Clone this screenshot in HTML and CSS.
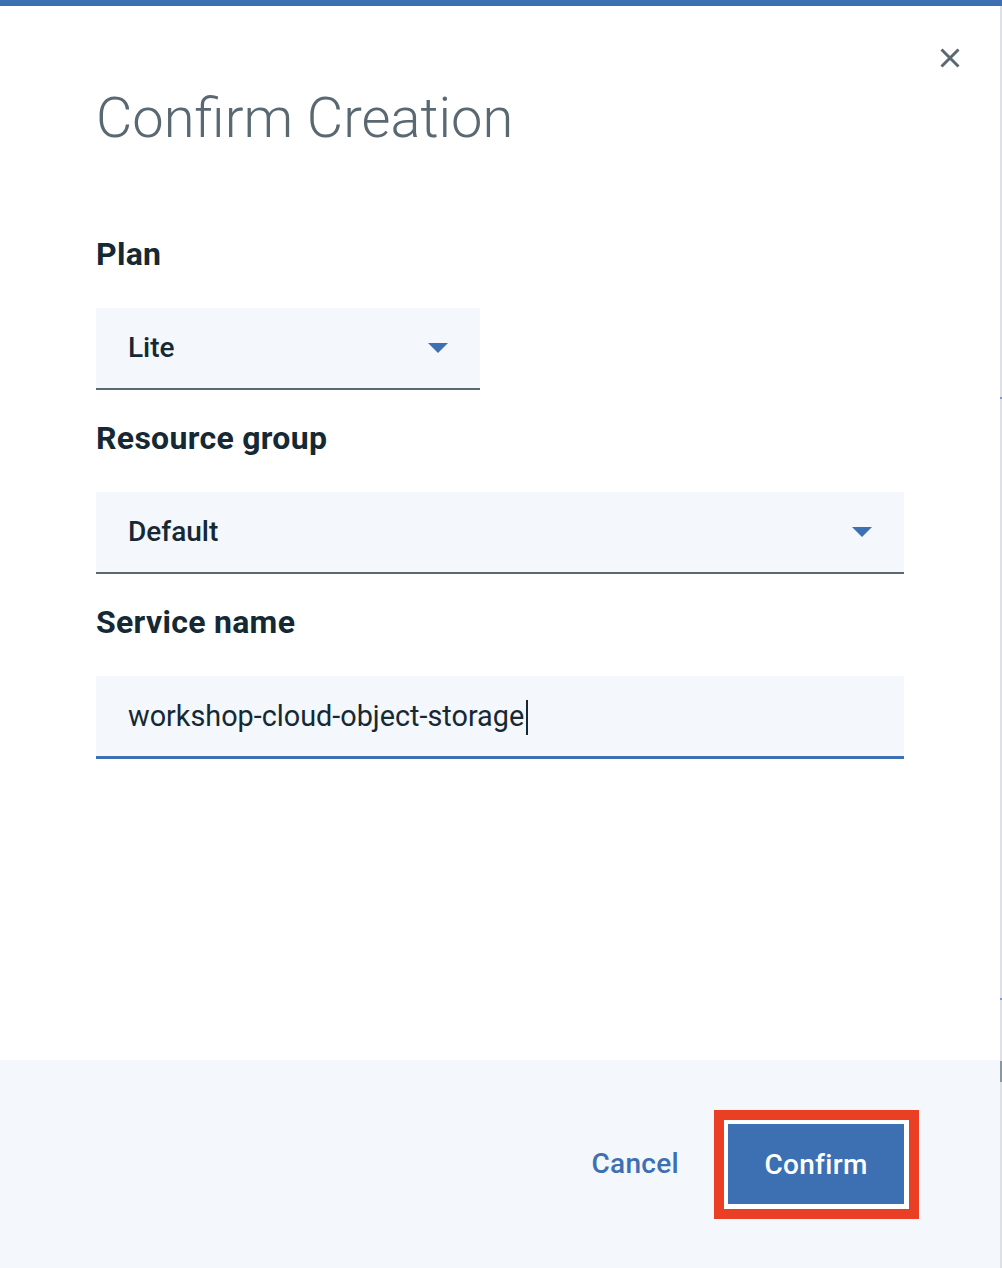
FILE: index.html
```html
<!DOCTYPE html>
<html lang="en">
<head>
<meta charset="utf-8">
<title>Confirm Creation</title>
<link rel="stylesheet" href="styles.css">
</head>
<body>
<div class="topbar"></div>
<div class="page">
  <div class="modal">
    <div class="modal-body">
      <div class="header">
        <h1 class="title">Confirm Creation</h1>
        <button class="close" aria-label="Close">
          <svg width="20" height="20" viewBox="0 0 20 20"><path d="M1.5 1.5 L18.5 18.5 M18.5 1.5 L1.5 18.5" stroke="#5a6872" stroke-width="3" fill="none"/></svg>
        </button>
      </div>
      <div class="field field-first">
        <div class="label">Plan</div>
        <div class="select select-narrow">
          <span class="select-text">Lite</span>
          <svg class="caret" width="20" height="10" viewBox="0 0 20 10"><path d="M0 0 H20 L10 10 Z" fill="#3d70b2"/></svg>
        </div>
      </div>
      <div class="field">
        <div class="label">Resource group</div>
        <div class="select">
          <span class="select-text">Default</span>
          <svg class="caret" width="20" height="10" viewBox="0 0 20 10"><path d="M0 0 H20 L10 10 Z" fill="#3d70b2"/></svg>
        </div>
      </div>
      <div class="field">
        <div class="label">Service name</div>
        <div class="input">
          <span class="input-text">workshop-cloud-object-storage</span><span class="text-caret"></span>
        </div>
      </div>
    </div>
    <div class="footer">
      <button class="btn-cancel">Cancel</button>
      <div class="highlight">
        <button class="btn-confirm">Confirm</button>
      </div>
    </div>
  </div>
  <div class="scroll-edge">
    <div class="edge-seg edge-a"></div>
    <div class="edge-tick"></div>
    <div class="edge-seg edge-b"></div>
    <div class="edge-tick"></div>
    <div class="edge-seg edge-c"></div>
    <div class="edge-dark"></div>
    <div class="edge-seg edge-rest"></div>
  </div>
</div>
</body>
</html>
```

FILE: styles.css
```css
* { box-sizing: border-box; }
html, body { margin: 0; padding: 0; }
body {
  width: 1002px;
  height: 1268px;
  overflow: hidden;
  background: #ffffff;
  font-family: Roboto, "Liberation Sans", sans-serif;
  color: #152935;
}
.topbar {
  height: 6px;
  background: #3d70b2;
}
.page {
  display: flex;
  height: 1262px;
}
.modal {
  width: 1000px;
  display: flex;
  flex-direction: column;
  background: #ffffff;
}
.modal-body {
  flex: 1;
  padding: 42px 40px 0 96px;
}
.header {
  display: flex;
  justify-content: space-between;
  align-items: flex-start;
}
.title {
  margin: 35px 0 0 0;
  font-size: 56px;
  line-height: 70px;
  font-weight: 300;
  color: #5a6872;
  letter-spacing: 0;
}
.close {
  width: 20px;
  height: 20px;
  padding: 0;
  margin: 0;
  border: 0;
  background: transparent;
  display: block;
}
.close svg { display: block; }
.field {
  display: flex;
  flex-direction: column;
  margin-top: 28px;
  width: 808px;
}
.field-first { margin-top: 81px; }
.label {
  font-size: 32px;
  line-height: 40px;
  font-weight: 700;
  color: #152935;
  letter-spacing: 0.3px;
  margin-bottom: 34px;
}
.select {
  height: 82px;
  background: #f4f7fb;
  border-bottom: 2px solid #5a6872;
  display: flex;
  align-items: center;
  justify-content: space-between;
  padding: 0 32px 0 32px;
}
.select-narrow { width: 384px; }
.select-text {
  font-size: 28px;
  font-weight: 500;
  color: #152935;
  line-height: 80px;
}
.caret { display: block; }
.input {
  height: 83px;
  background: #f4f7fb;
  border-bottom: 3px solid #3d70b2;
  display: flex;
  align-items: center;
  padding: 0 32px;
}
.input-text {
  font-size: 28.8px;
  font-weight: 400;
  color: #152935;
  line-height: 80px;
}
.text-caret {
  display: inline-block;
  width: 2px;
  height: 35px;
  background: #152935;
  margin-left: 2px;
  margin-top: 2px;
}
.footer {
  height: 208px;
  background: #f4f7fb;
  display: flex;
  justify-content: flex-end;
  align-items: center;
  padding-right: 96px;
}
.btn-cancel {
  font-family: Roboto, "Liberation Sans", sans-serif;
  font-size: 28px;
  font-weight: 500;
  color: #3d70b2;
  background: transparent;
  border: 0;
  padding: 0;
  margin-right: 49px;
  line-height: 40px;
  letter-spacing: 0.3px;
}
.highlight {
  border: 10px solid #ea3f25;
  background: #ffffff;
  padding: 4px 5px 5px 4px;
  margin: -14px -15px -15px -14px;
}
.btn-confirm {
  display: block;
  width: 176px;
  height: 80px;
  background: #3d70b2;
  color: #ffffff;
  border: 0;
  padding: 0;
  font-family: Roboto, "Liberation Sans", sans-serif;
  font-size: 28px;
  font-weight: 500;
  letter-spacing: 0.3px;
}
.scroll-edge {
  width: 2px;
  display: flex;
  flex-direction: column;
}
.edge-seg { background: #dde1e6; }
.edge-a { height: 391px; }
.edge-b { height: 599px; }
.edge-c { height: 61px; }
.edge-rest { flex: 1; }
.edge-tick { height: 2px; background: #7f9bc4; }
.edge-dark { height: 21px; background: #8a979f; }
```
